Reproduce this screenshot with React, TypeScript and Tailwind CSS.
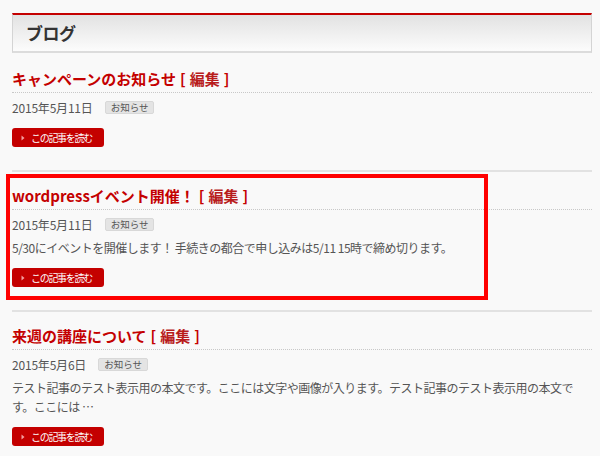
import React from "react";

const FONT = '"Noto Sans CJK JP", "Noto Sans", "Liberation Sans", sans-serif';

type Post = {
  title: string;
  date: string;
  body?: string;
};

const posts: Post[] = [
  { title: "キャンペーンのお知らせ", date: "2015年5月11日" },
  {
    title: "wordpressイベント開催！",
    date: "2015年5月11日",
    body: "5/30にイベントを開催します！ 手続きの都合で申し込みは5/11 15時で締め切ります。",
  },
  {
    title: "来週の講座について",
    date: "2015年5月6日",
    body: "テスト記事のテスト表示用の本文です。ここには文字や画像が入ります。テスト記事のテスト表示用の本文です。ここには …",
  },
];

function ReadButton() {
  return (
    <a className="mt-[11px] flex h-[19px] w-[92px] items-center rounded-[3px] bg-[#c40000] pl-[9px] text-white no-underline">
      <svg width="4" height="6" viewBox="0 0 4 6" className="mr-[6px] shrink-0">
        <path d="M0.5 0.5 L3.5 3 L0.5 5.5 Z" fill="#f3a0a0" />
      </svg>
      <span className="text-[10px] leading-[19px] tracking-[-1.3px]">この記事を読む</span>
    </a>
  );
}

function PostItem({ post, first }: { post: Post; first: boolean }) {
  return (
    <div className={first ? "mt-4" : "mt-[14px]"}>
      <div className="border-b border-dotted border-[#c8c8c8] pb-[3px]">
        <h2 className="flex h-[20px] items-center text-[15px] font-bold leading-[20px] text-[#c40000]">
          <span>{post.title}</span>
          <span className="ml-[4px]">[</span>
          <span className="px-[4px] text-[#b81c1c]">編集</span>
          <span>]</span>
        </h2>
      </div>
      <div className="mt-[5px] flex h-[19px] items-center">
        <span className="text-[12px] leading-[19px] text-[#555] tracking-[-0.2px]">{post.date}</span>
        <span className="ml-[12px] flex h-[13px] items-center rounded-[2px] border border-[#d8d8d8] bg-[#e4e4e4] px-[5px] text-[9.5px] leading-none text-[#555]">
          お知らせ
        </span>
      </div>
      {post.body && (
        <p className="mt-[4px] text-[12px] leading-[19px] text-[#555] tracking-[-0.5px]">{post.body}</p>
      )}
      <ReadButton />
      <div className="mt-[23px] h-[2px] bg-[#e2e2e2]" />
    </div>
  );
}

export default function App() {
  return (
    <div
      className="relative h-[456px] w-[600px] overflow-hidden bg-[#f9f9f9] pl-[12px] pr-[8px] pt-[13px]"
      style={{ fontFamily: FONT }}
    >
      <div className="flex h-[40px] items-center border-x border-b-2 border-t-2 border-x-[#d4d4d4] border-b-[#dcdcdc] border-t-[#c40000] bg-gradient-to-b from-[#e2e2e2] to-[#fcfcfc] pl-[13px]">
        <h1 className="text-[17px] font-bold text-[#333] tracking-[-0.5px]">ブログ</h1>
      </div>
      {posts.map((p, i) => (
        <PostItem key={i} post={p} first={i === 0} />
      ))}
      <div className="pointer-events-none absolute left-[6px] top-[174px] h-[126px] w-[482px] border-4 border-[#ff0000]" />
    </div>
  );
}
